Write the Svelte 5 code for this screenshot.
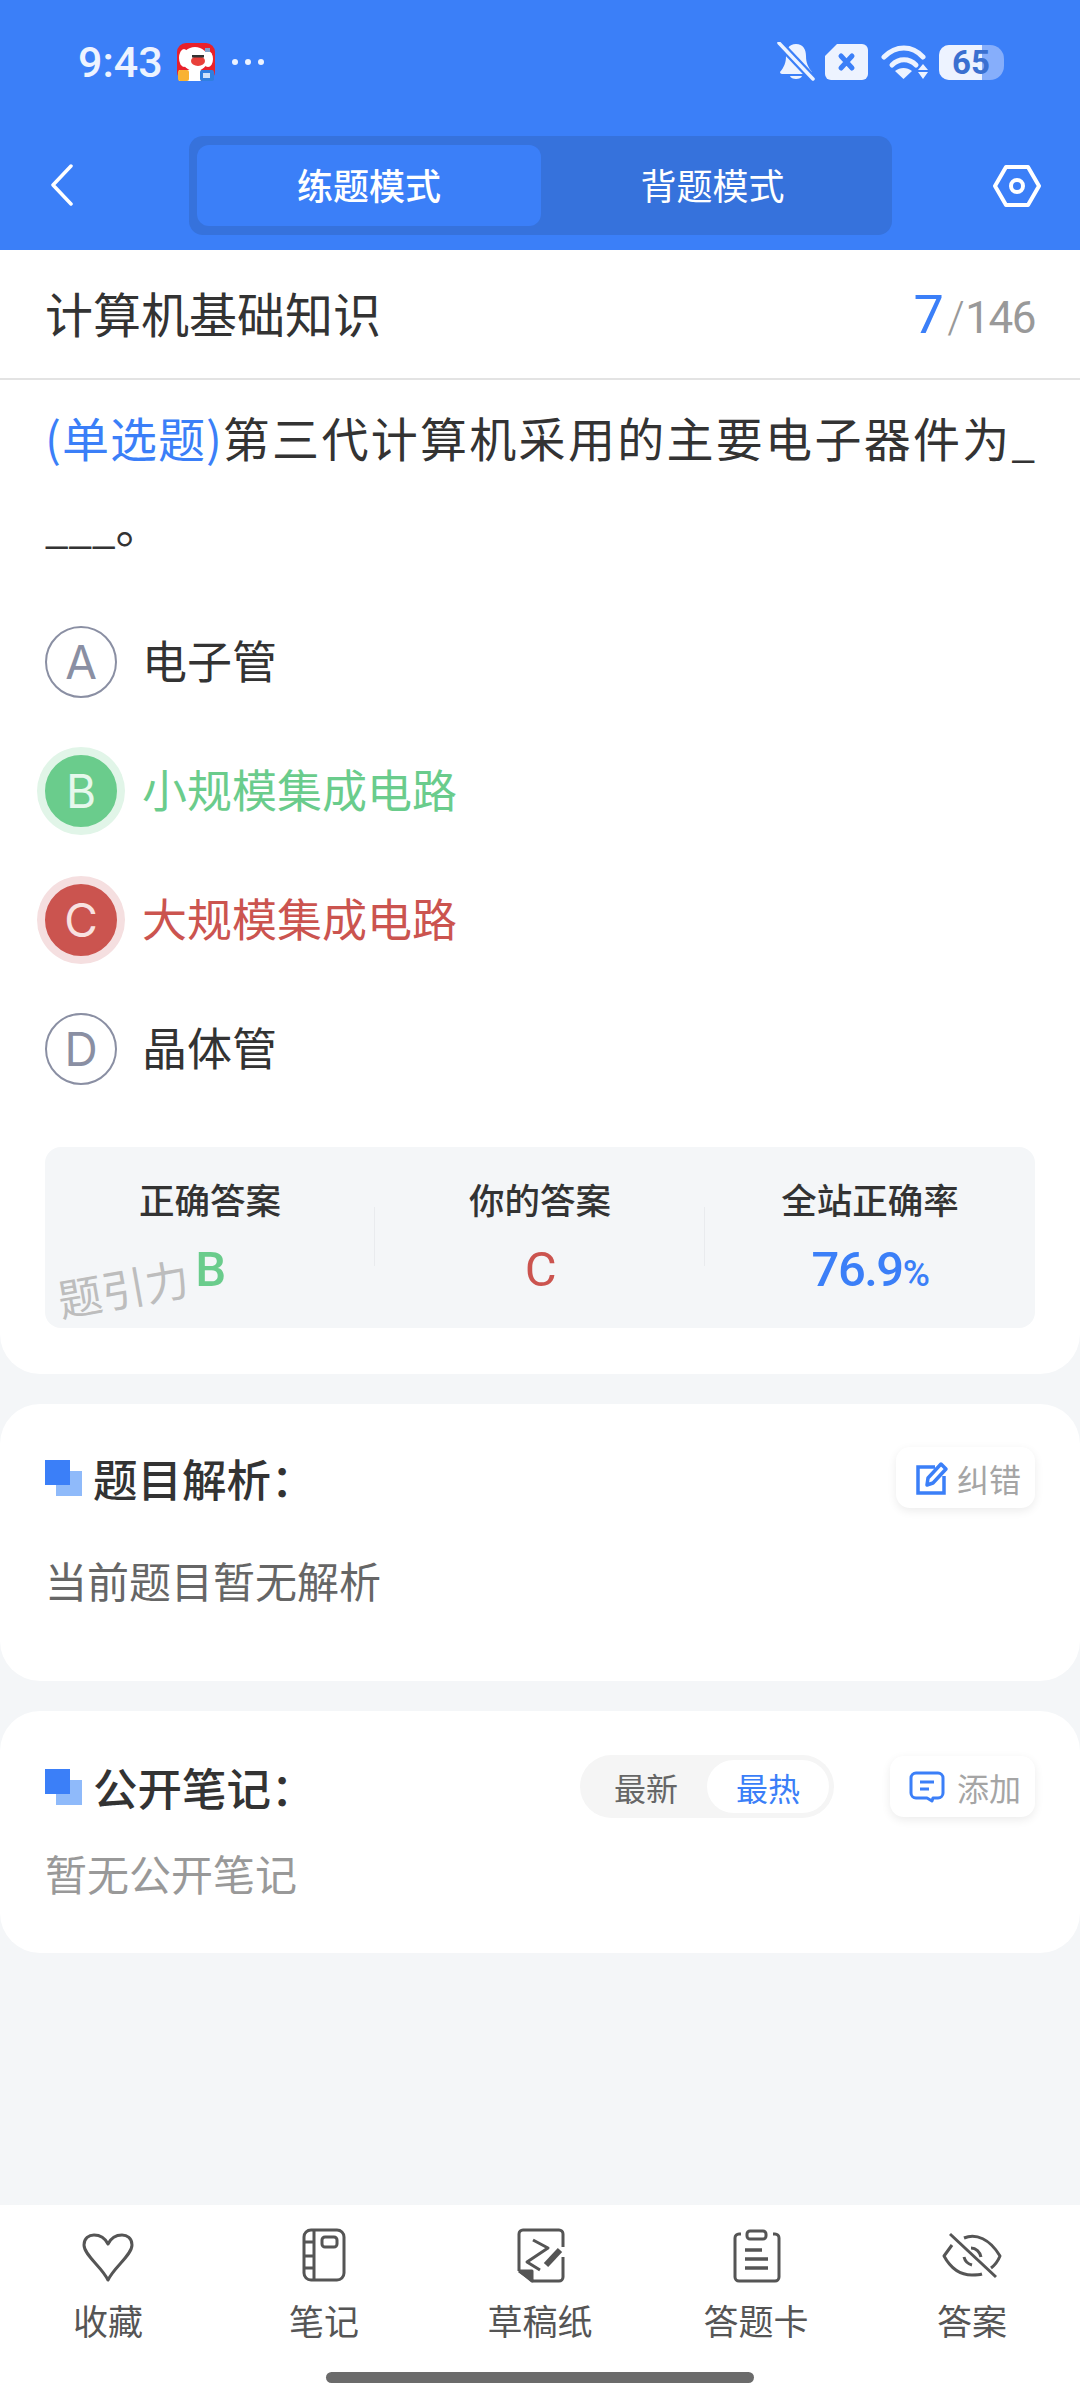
<script>
	const options = [
		{ key: 'A', text: '电子管', state: '' },
		{ key: 'B', text: '小规模集成电路', state: 'right' },
		{ key: 'C', text: '大规模集成电路', state: 'wrong' },
		{ key: 'D', text: '晶体管', state: '' }
	];
</script>

<div class="page">
	<header class="header">
		<div class="status">
			<div class="status-left">
				<span class="time">9:43</span>
				<svg class="app-icon" viewBox="0 0 38 38">
					<rect width="38" height="38" rx="9" fill="#e8202a" />
					<ellipse cx="7" cy="15" rx="5" ry="9" fill="#fff" />
					<ellipse cx="31" cy="16" rx="5" ry="8" fill="#fff" />
					<ellipse cx="18" cy="16" rx="13" ry="12" fill="#fff" />
					<ellipse cx="21" cy="18" rx="7" ry="5" fill="#e8403a" />
					<rect x="15" y="12" width="12" height="2.500" fill="#333" />
					<rect x="28" y="5" width="5" height="4" fill="#7f9fc8" />
					<rect x="2" y="27" width="22" height="11" fill="#fff" />
					<rect x="1" y="27" width="11" height="11" rx="2" fill="#f9b233" />
					<rect x="23" y="27" width="14" height="11" rx="2" fill="#2f7fe0" />
					<rect x="26" y="30" width="7" height="5" fill="#cfe2fa" />
				</svg>
				<span class="dots"><i></i><i></i><i></i></span>
			</div>
			<div class="status-right">
				<svg width="38" height="40" viewBox="0 0 38 40">
					<path d="M19 2c-7 0-10 5-10 12 0 7-2 11-6 16 0 1 1 2 2 2h28c1 0 2-1 2-2-4-5-6-9-6-16 0-7-3-12-10-12z" fill="#edf3ff" />
					<path d="M13 34h12c-1 4-11 4-12 0z" fill="#edf3ff" />
					<path d="M1 0 L37 38" stroke="#3b7ff8" stroke-width="8" />
					<path d="M2 1 L36 37" stroke="#edf3ff" stroke-width="3.500" stroke-linecap="round" />
				</svg>
				<svg width="43" height="36" viewBox="0 0 43 36">
					<path d="M12 0h25a6 6 0 0 1 6 6v24a6 6 0 0 1-6 6H6a6 6 0 0 1-6-6V12z" fill="#edf3ff" />
					<path d="M16 12l11 12M27 12L16 24" stroke="#3b7ff8" stroke-width="5" stroke-linecap="round" />
				</svg>
				<svg class="wifi" width="48" height="34" viewBox="0 0 48 34">
					<path d="M3 12c12-12 28-12 39 0" fill="none" stroke="#edf3ff" stroke-width="5" stroke-linecap="round" />
					<path d="M11 20c7-7 17-7 24 0" fill="none" stroke="#edf3ff" stroke-width="5" stroke-linecap="round" />
					<path d="M14 26c5-4 12-4 17 0l-8.500 8z" fill="#edf3ff" />
					<path d="M42 19l5 6h-10zM42 34l5-7h-10z" fill="#edf3ff" />
				</svg>
				<span class="battery">
					<span class="battery-fill"></span>
					<span class="battery-num">65</span>
				</span>
			</div>
		</div>
		<nav class="nav">
			<svg class="back" width="24" height="42" viewBox="0 0 24 42">
				<path d="M21 2 L3 21 L21 40" fill="none" stroke="#fff" stroke-width="3.500" stroke-linecap="round" stroke-linejoin="round" />
			</svg>
			<div class="segment">
				<div class="seg-item active">练题模式</div>
				<div class="seg-item">背题模式</div>
			</div>
			<svg class="hex" width="48" height="44" viewBox="0 0 48 44">
				<path d="M13 3h22l11 19-11 19H13L2 22z" fill="none" stroke="#fff" stroke-width="4" stroke-linejoin="round" />
				<circle cx="24" cy="22" r="6" fill="none" stroke="#fff" stroke-width="4" />
			</svg>
		</nav>
	</header>

	<section class="question-card">
		<div class="title-row">
			<span class="title">计算机基础知识</span>
			<span class="progress"><b>7</b><em>/</em>146</span>
		</div>
		<div class="question"><span class="type">(单选题)</span>第三代计算机采用的主要电子器件为<span class="blank">____</span>。</div>
		<div class="options">
			{#each options as opt}
				<div class="option {opt.state}">
					<span class="badge">{opt.key}</span>
					<span class="opt-text">{opt.text}</span>
				</div>
			{/each}
		</div>
		<div class="stats">
			<div class="stat">
				<span class="stat-label">正确答案</span>
				<span class="stat-value green">B</span>
			</div>
			<div class="stat">
				<span class="stat-label">你的答案</span>
				<span class="stat-value red">C</span>
			</div>
			<div class="stat">
				<span class="stat-label">全站正确率</span>
				<span class="stat-value blue">76.9<small>%</small></span>
			</div>
			<span class="watermark">题引力</span>
		</div>
	</section>

	<section class="card analysis">
		<div class="card-head">
			<h2 class="heading"><span class="mark"></span>题目解析：</h2>
			<div class="chip">
				<svg width="34" height="34" viewBox="0 0 34 34">
					<path d="M20 6H3v26h26V15" fill="none" stroke="#3b7ff8" stroke-width="3.500" />
					<path d="M12 24l1-7L26 3l5 5-13 14z" fill="none" stroke="#3b7ff8" stroke-width="3.500" stroke-linejoin="round" />
				</svg>
				<span>纠错</span>
			</div>
		</div>
		<p class="body-text">当前题目暂无解析</p>
	</section>

	<section class="card notes">
		<div class="card-head">
			<h2 class="heading"><span class="mark"></span>公开笔记：</h2>
			<div class="head-tools">
				<div class="sort">
					<span class="sort-item">最新</span>
					<span class="sort-item on">最热</span>
				</div>
				<div class="chip wide">
					<svg width="36" height="32" viewBox="0 0 36 32">
						<path d="M7 2h22a5 5 0 0 1 5 5v15a5 5 0 0 1-5 5h-5l-1 3-5-3H7a5 5 0 0 1-5-5V7a5 5 0 0 1 5-5z" fill="none" stroke="#3b7ff8" stroke-width="3" stroke-linejoin="round" />
						<path d="M11 11h14M11 18h9" stroke="#3b7ff8" stroke-width="3" />
					</svg>
					<span>添加</span>
				</div>
			</div>
		</div>
		<p class="empty">暂无公开笔记</p>
	</section>

	<div class="spacer"></div>

	<footer class="tabbar">
		<div class="tabs">
			<div class="tab">
				<svg viewBox="0 0 60 60">
					<path d="M30 55 C24 42 6 30 6 20 C6 13 11 10 16 10 C22 10 27 13 30 19 C33 13 38 10 44 10 C49 10 54 13 54 20 C54 30 36 42 30 55z" />
				</svg>
				<span>收藏</span>
			</div>
			<div class="tab">
				<svg viewBox="0 0 60 60">
					<rect x="10" y="5" width="40" height="50" rx="7" />
					<path d="M20 5v50M10 17h10M10 31h10M10 43h10" />
					<rect x="28" y="12" width="15" height="10" rx="3" />
				</svg>
				<span>笔记</span>
			</div>
			<div class="tab">
				<svg viewBox="0 0 60 60">
					<path d="M9 46V9a4 4 0 0 1 4-4h36a4 4 0 0 1 4 4v13M53 32v20a4 4 0 0 1-4 4H23L9 46" />
					<path d="M10 46h12v10z" fill="#555" />
					<path d="M23 15l15 8-21 14 13 8" stroke-linejoin="round" />
					<path d="M36 40l14-15" stroke-width="6" />
				</svg>
				<span>草稿纸</span>
			</div>
			<div class="tab">
				<svg viewBox="0 0 60 60">
					<path d="M15 9h-2a4 4 0 0 0-4 4v39a4 4 0 0 0 4 4h36a4 4 0 0 0 4-4V13a4 4 0 0 0-4-4h-2" />
					<rect x="21" y="6" width="19" height="8" rx="3" />
					<path d="M19 25h17M19 34h23M19 43h23" stroke-width="3.500" />
				</svg>
				<span>答题卡</span>
			</div>
			<div class="tab">
				<svg viewBox="0 0 60 60">
					<path d="M10 20 L2 31 C8 42 16 50 30 50 C34 50 37 50 40 49" />
					<path d="M22 13 C34 8 48 14 58 31 C56 36 53 40 49 43" />
					<path d="M22 32 C23 36 26 39 30 40" />
					<path d="M29 23 C34 23 38 27 39 32" />
					<path d="M8 9 L54 52" />
				</svg>
				<span>答案</span>
			</div>
		</div>
		<div class="home-bar"></div>
	</footer>
</div>

<style>
	:global(body) {
		margin: 0;
		background: #f4f6f8;
	}

	.page {
		width: 1080px;
		height: 2400px;
		display: flex;
		flex-direction: column;
		background: #f4f6f8;
		font-family: 'Noto Sans CJK SC', 'Noto Sans', sans-serif;
		color: #333;
		overflow: hidden;
	}

	.header {
		height: 250px;
		background: #3b7ff8;
		flex-shrink: 0;
	}

	.status {
		height: 124px;
		padding: 0 76px 0 78px;
		box-sizing: border-box;
		display: flex;
		justify-content: space-between;
		align-items: center;
	}

	.status-left,
	.status-right {
		display: flex;
		align-items: center;
	}

	.time {
		font-family: Roboto, sans-serif;
		font-size: 43px;
		font-weight: 500;
		color: #edf3ff;
		width: 99px;
	}

	.app-icon {
		width: 38px;
		height: 38px;
	}

	.dots {
		display: flex;
		gap: 7px;
		margin-left: 17px;
	}

	.dots i {
		width: 6px;
		height: 6px;
		border-radius: 50%;
		background: #edf3ff;
	}

	.status-right {
		gap: 10px;
	}

	.wifi {
		margin-left: 3px;
	}

	.battery {
		position: relative;
		width: 65px;
		height: 35px;
		border-radius: 10px 14px 14px 10px;
		background: #86aefb;
	}

	.battery-fill {
		position: absolute;
		left: 0;
		top: 0;
		bottom: 0;
		width: 43px;
		border-radius: 10px 0 0 10px;
		background: #edf3ff;
	}

	.battery-num {
		position: absolute;
		left: 13px;
		top: 0;
		font-family: Roboto, sans-serif;
		font-size: 33px;
		line-height: 35px;
		font-weight: 700;
		color: #3a70d0;
	}

	.nav {
		display: grid;
		grid-template-columns: 189px 703px 188px;
		align-items: center;
		padding-top: 12px;
	}

	.back {
		margin-left: 50px;
		margin-bottom: 2px;
	}

	.hex {
		justify-self: end;
		margin-right: 39px;
	}

	.segment {
		height: 99px;
		box-sizing: border-box;
		padding: 9px 8px;
		border-radius: 14px;
		background: #3672dc;
		display: grid;
		grid-template-columns: 344px 1fr;
	}

	.seg-item {
		display: flex;
		align-items: center;
		justify-content: center;
		padding-bottom: 3px;
		font-size: 36px;
		color: #fff;
		border-radius: 12px;
	}

	.seg-item.active {
		background: #3b7ff8;
		font-weight: 500;
	}

	.question-card {
		background: #fff;
		border-radius: 0 0 40px 40px;
		height: 1124px;
		flex-shrink: 0;
		box-sizing: border-box;
	}

	.title-row {
		height: 130px;
		padding: 0 45px;
		box-sizing: border-box;
		border-bottom: 2px solid #e3e3e3;
		display: flex;
		align-items: center;
		justify-content: space-between;
	}

	.title {
		font-size: 48px;
		line-height: 66px;
		margin-top: -4px;
	}

	.progress {
		font-family: Roboto, sans-serif;
		font-size: 44px;
		letter-spacing: -1.500px;
		color: #999;
		display: flex;
		align-items: baseline;
	}

	.progress b {
		font-size: 54px;
		font-weight: 400;
		color: #3b7ff8;
	}

	.progress em {
		font-style: normal;
		font-weight: 300;
		margin: 0 2px 0 5px;
	}

	.question {
		padding: 15px 36px 0 45px;
		font-size: 47px;
		line-height: 84px;
		letter-spacing: 2.300px;
		word-break: break-all;
	}

	.type {
		color: #3b7ff8;
		letter-spacing: 1px;
	}

	.blank {
		font-size: 42px;
		letter-spacing: 0;
	}

	.options {
		margin-top: 59px;
		display: flex;
		flex-direction: column;
		gap: 57px;
		padding-left: 45px;
	}

	.option {
		height: 72px;
		display: flex;
		align-items: center;
		gap: 25px;
	}

	.badge {
		width: 72px;
		height: 72px;
		box-sizing: border-box;
		border: 2px solid #8a8fa3;
		border-radius: 50%;
		display: flex;
		align-items: center;
		justify-content: center;
		font-family: Inter, sans-serif;
		font-size: 46px;
		color: #8a8fa3;
		flex-shrink: 0;
	}

	.opt-text {
		font-size: 45px;
		margin-top: -6px;
	}

	.option.right .badge {
		background: #6acc8c;
		border-color: #6acc8c;
		color: #e6f8ec;
		box-shadow: 0 0 0 8px #e1f5e8;
	}

	.option.right .opt-text {
		color: #6acc8c;
	}

	.option.wrong .badge {
		background: #cb544f;
		border-color: #cb544f;
		color: #f8e2e1;
		box-shadow: 0 0 0 8px #f5dfe0;
	}

	.option.wrong .opt-text {
		color: #cb544f;
	}

	.stats {
		position: relative;
		margin: 62px 45px 0;
		height: 181px;
		background: #f4f6f8;
		border-radius: 16px;
		display: grid;
		grid-template-columns: repeat(3, 1fr);
	}

	.stat {
		display: flex;
		flex-direction: column;
		align-items: center;
		padding-top: 27px;
		position: relative;
	}

	.stat + .stat::before {
		content: '';
		position: absolute;
		left: -1px;
		top: 60px;
		height: 59px;
		width: 1px;
		background: #e9ebee;
	}

	.stat-label {
		font-size: 35.500px;
		line-height: 50px;
		font-weight: 500;
	}

	.stat-value {
		font-family: Roboto, sans-serif;
		font-size: 49px;
		line-height: 56px;
		margin-top: 18px;
		font-weight: 500;
		letter-spacing: -1.500px;
	}

	.stat-value.red {
		font-weight: 400;
	}

	.stat-value small {
		font-size: 37px;
	}

	.green {
		color: #6acc8c;
	}

	.red {
		color: #cb544f;
	}

	.blue {
		color: #3b7ff8;
	}

	.watermark {
		position: absolute;
		left: 12px;
		top: 112px;
		font-size: 44px;
		line-height: 56px;
		color: #bdbdbd;
		transform: rotate(-10deg);
	}

	.card {
		background: #fff;
		border-radius: 40px;
		margin-top: 30px;
		box-sizing: border-box;
		padding: 0 45px;
		flex-shrink: 0;
	}

	.analysis {
		height: 277px;
		padding-top: 43px;
	}

	.notes {
		height: 242px;
		padding-top: 44px;
	}

	.card-head {
		display: flex;
		align-items: center;
		justify-content: space-between;
	}

	.heading {
		margin: 0;
		font-size: 44.500px;
		line-height: 61px;
		font-weight: 500;
		display: flex;
		align-items: center;
		position: relative;
		padding-left: 48px;
		isolation: isolate;
	}

	.mark {
		position: absolute;
		left: 0;
		top: 13px;
		width: 25px;
		height: 25px;
		background: #3b7ff8;
	}

	.mark::before {
		content: '';
		position: absolute;
		left: 11px;
		top: 11px;
		width: 26px;
		height: 25px;
		background: #8fbafa;
		z-index: -1;
	}

	.chip {
		height: 61px;
		box-sizing: border-box;
		padding: 0 14px 0 19px;
		background: #fff;
		border-radius: 14px;
		box-shadow: 0 3px 10px rgba(0, 0, 0, 0.08);
		display: flex;
		align-items: center;
		gap: 8px;
		font-size: 32px;
		color: #a5a5a5;
	}

	.chip.wide {
		gap: 12px;
	}

	.body-text {
		margin: 42px 0 0 0;
		font-size: 42px;
		line-height: 60px;
		color: #666;
	}

	.head-tools {
		display: flex;
		align-items: center;
		gap: 56px;
	}

	.sort {
		width: 254px;
		height: 63px;
		box-sizing: border-box;
		padding: 5px;
		background: #f5f5f5;
		border-radius: 32px;
		display: grid;
		grid-template-columns: 122px 122px;
		font-size: 32px;
		color: #666;
	}

	.sort-item {
		display: flex;
		align-items: center;
		justify-content: center;
		border-radius: 27px;
	}

	.sort-item.on {
		background: #fff;
		color: #3b7ff8;
	}

	.empty {
		margin: 25px 0 0 0;
		font-size: 42px;
		line-height: 60px;
		color: #999;
	}

	.spacer {
		flex: 1;
	}

	.tabbar {
		height: 195px;
		background: #fff;
		flex-shrink: 0;
		position: relative;
	}

	.tabs {
		display: grid;
		grid-template-columns: repeat(5, 216px);
		padding-top: 20px;
	}

	.tab {
		display: flex;
		flex-direction: column;
		align-items: center;
		font-size: 35px;
		line-height: 50px;
		color: #555;
	}

	.tab svg {
		width: 60px;
		height: 60px;
		margin-bottom: 10px;
		fill: none;
		stroke: #555;
		stroke-width: 3;
		stroke-linejoin: round;
	}

	.home-bar {
		position: absolute;
		left: 326px;
		bottom: 17px;
		width: 428px;
		height: 11px;
		border-radius: 6px;
		background: #6b6b6b;
	}
</style>
